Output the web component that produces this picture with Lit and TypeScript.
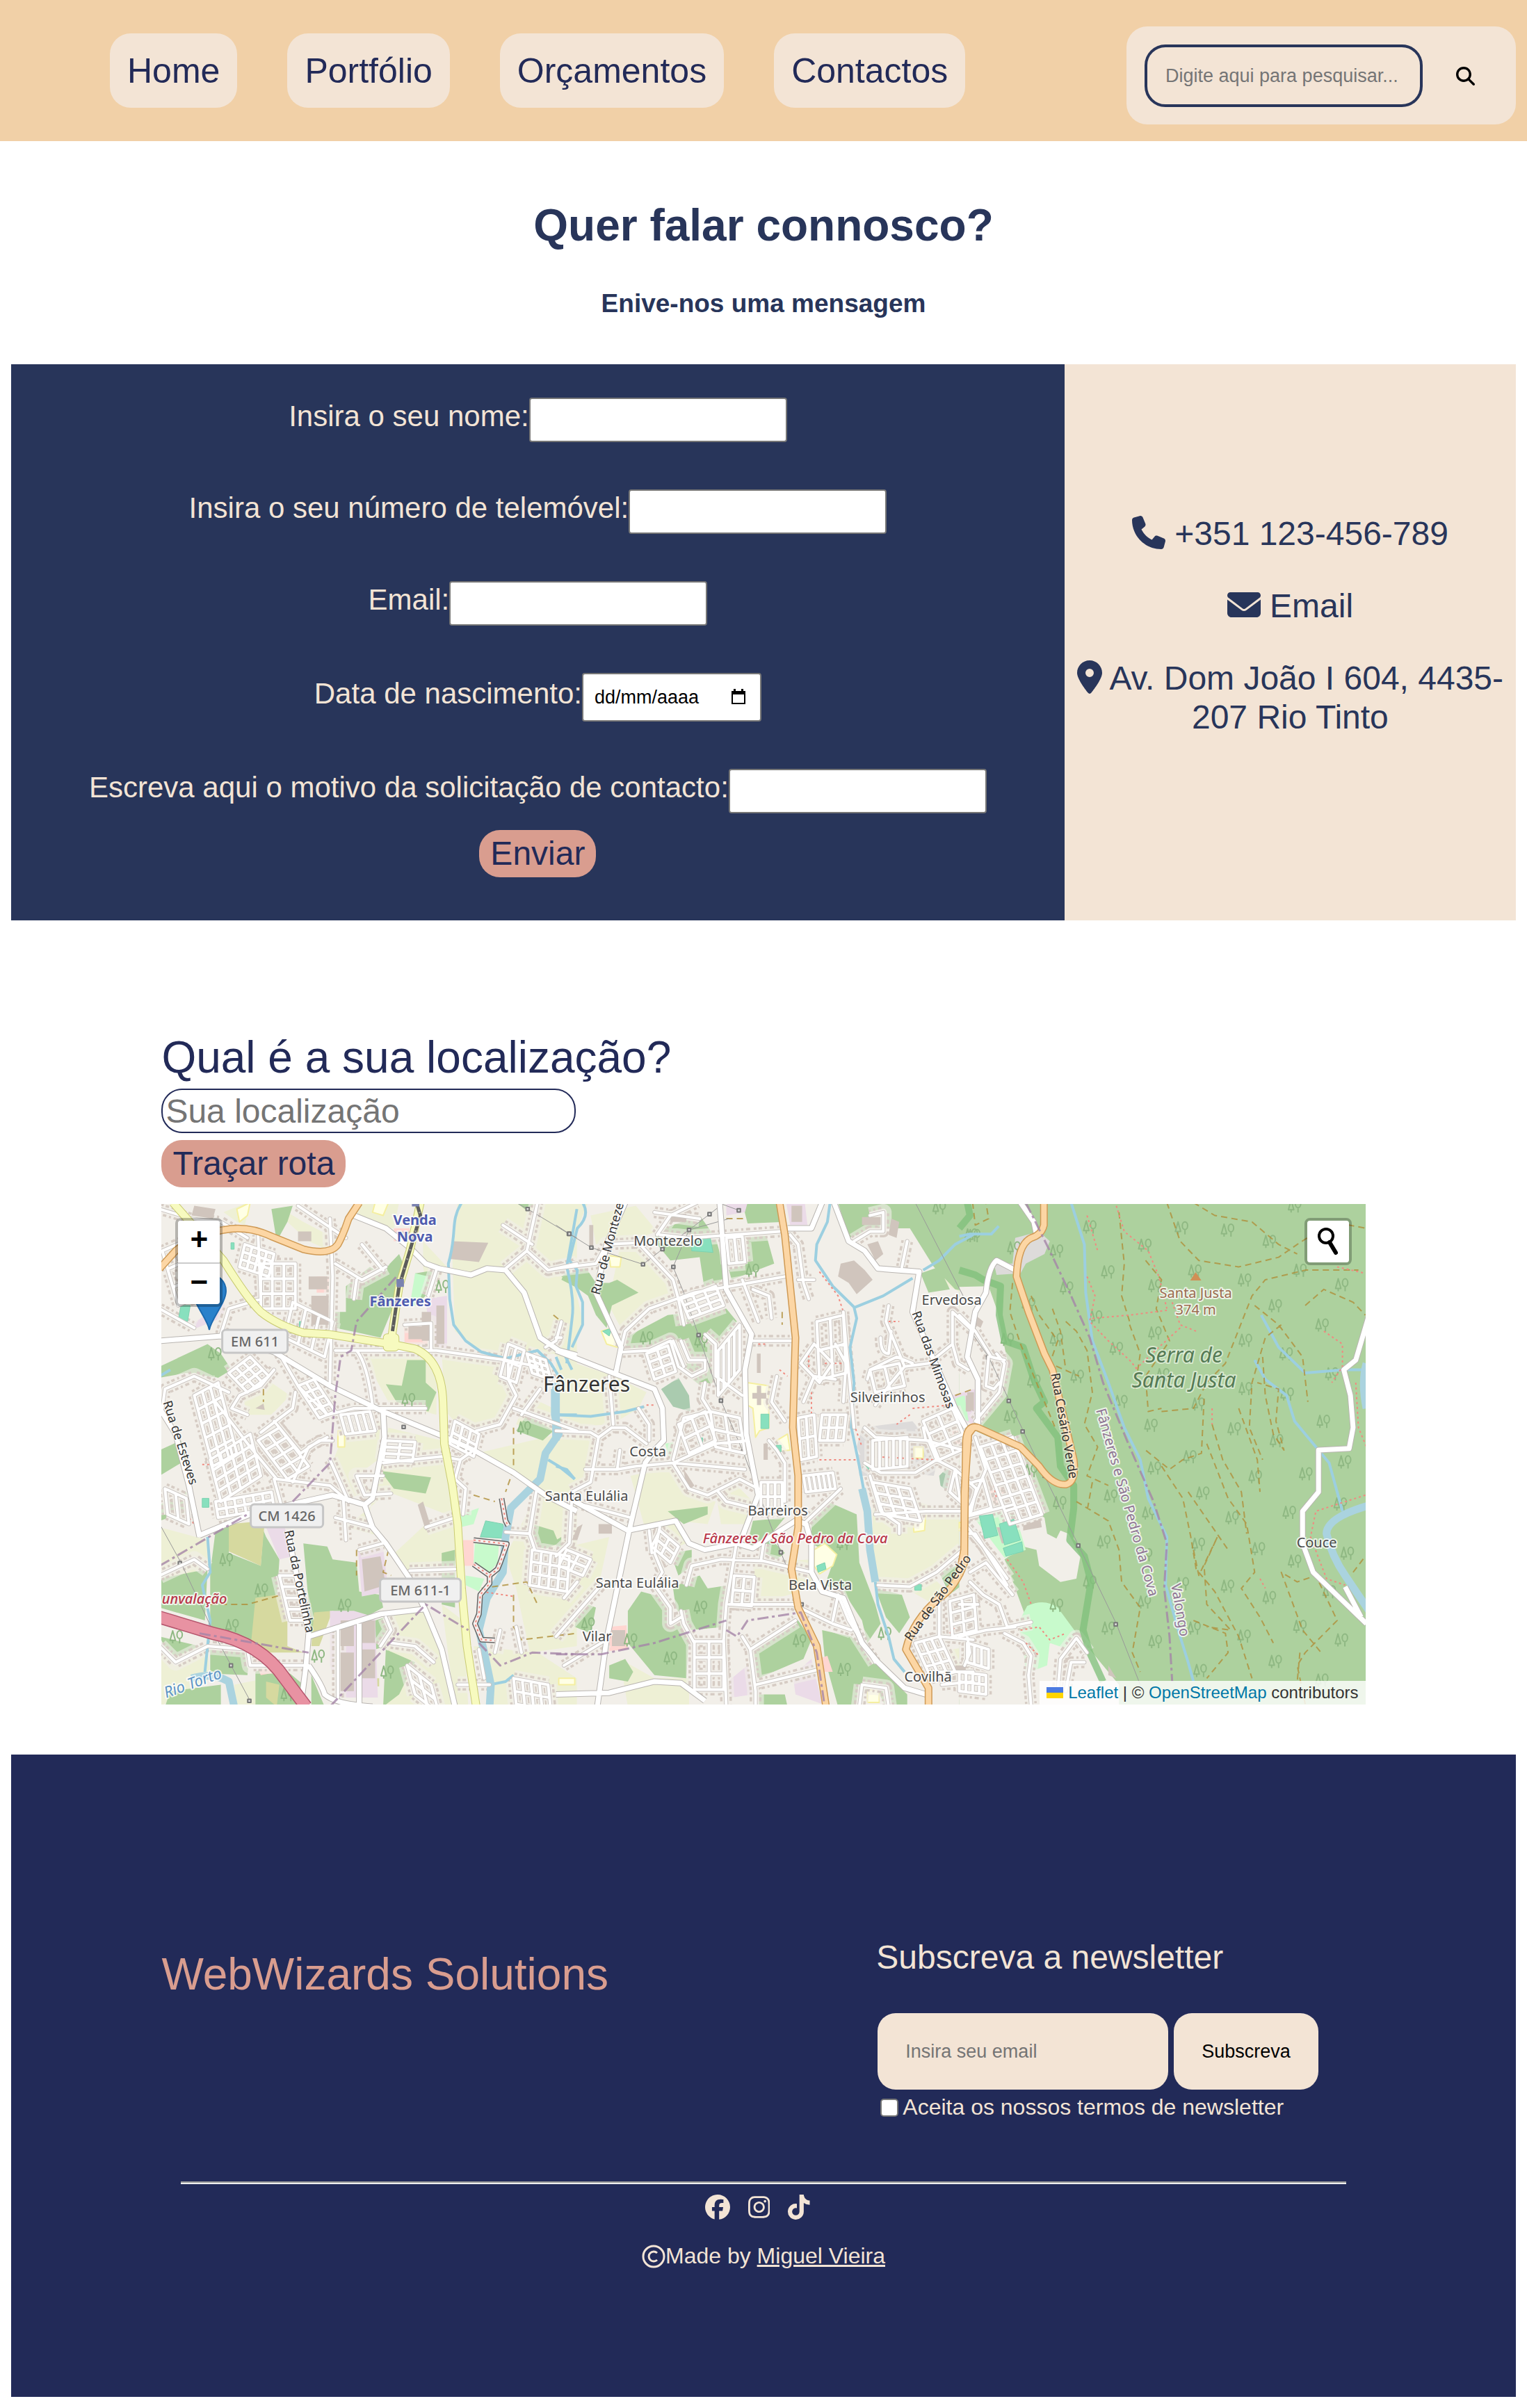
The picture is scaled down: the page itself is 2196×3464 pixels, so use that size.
import { LitElement, html, css, svg } from "lit";
import { customElement } from "lit/decorators.js";

/* ---------- icons ---------- */
const ICONS: Record<string, { w: number; d: string }> = {
  search: { w: 512, d: "M416 208c0 45.9-14.9 88.3-40 122.7L502.6 457.4c12.5 12.5 12.5 32.8 0 45.3s-32.8 12.5-45.3 0L330.7 376c-34.4 25.2-76.8 40-122.7 40C93.1 416 0 322.9 0 208S93.1 0 208 0S416 93.1 416 208zM208 352a144 144 0 1 0 0-288 144 144 0 1 0 0 288z" },
  phone: { w: 512, d: "M164.9 24.6c-7.7-18.6-28-28.5-47.4-23.2l-88 24C12.1 30.2 0 46 0 64C0 311.4 200.6 512 448 512c18 0 33.8-12.1 38.6-29.5l24-88c5.3-19.4-4.6-39.7-23.2-47.4l-96-40c-16.3-6.8-35.2-2.1-46.3 11.6L304.7 368C234.3 334.7 177.3 277.7 144 207.3L193.3 167c13.7-11.2 18.4-30 11.6-46.3l-40-96z" },
  envelope: { w: 512, d: "M48 64C21.5 64 0 85.5 0 112c0 15.1 7.1 29.3 19.2 38.4L236.8 313.6c11.4 8.5 27 8.5 38.4 0L492.8 150.4c12.1-9.1 19.2-23.3 19.2-38.4c0-26.5-21.5-48-48-48H48zM0 176V384c0 35.3 28.7 64 64 64H448c35.3 0 64-28.7 64-64V176L294.4 339.2c-22.8 17.1-54 17.1-76.8 0L0 176z" },
  pin: { w: 384, d: "M215.7 499.2C267 435 384 279.4 384 192C384 86 298 0 192 0S0 86 0 192c0 87.4 117 243 168.3 307.2c12.3 15.3 35.1 15.3 47.4 0zM192 128a64 64 0 1 1 0 128 64 64 0 1 1 0-128z" },
  facebook: { w: 512, d: "M512 256C512 114.6 397.4 0 256 0S0 114.6 0 256C0 376 82.7 476.8 194.2 504.5V334.2H141.4V256h52.8V222.3c0-87.1 39.4-127.5 125-127.5c16.2 0 44.2 3.2 55.7 6.4V172c-6-.6-16.5-1-29.6-1c-42 0-58.2 15.9-58.2 57.2V256h83.6l-14.4 78.2H287V510.1C413.8 494.8 512 386.9 512 256z" },
  instagram: { w: 448, d: "M224.1 141c-63.6 0-114.9 51.3-114.9 114.9s51.3 114.9 114.9 114.9S339 319.5 339 255.9 287.7 141 224.1 141zm0 189.6c-41.1 0-74.7-33.5-74.7-74.7s33.5-74.7 74.7-74.7 74.7 33.5 74.7 74.7-33.6 74.7-74.7 74.7zm146.4-194.3c0 14.9-12 26.8-26.8 26.8-14.9 0-26.8-12-26.8-26.8s12-26.8 26.8-26.8 26.8 12 26.8 26.8zm76.1 27.2c-1.7-35.9-9.9-67.7-36.2-93.9-26.2-26.2-58-34.4-93.9-36.2-37-2.1-147.9-2.1-184.9 0-35.8 1.7-67.6 9.9-93.9 36.1s-34.4 58-36.2 93.9c-2.1 37-2.1 147.9 0 184.9 1.7 35.9 9.9 67.7 36.2 93.9s58 34.4 93.9 36.2c37 2.1 147.9 2.1 184.9 0 35.9-1.7 67.7-9.9 93.9-36.2 26.2-26.2 34.4-58 36.2-93.9 2.1-37 2.1-147.8 0-184.8zM398.8 388c-7.8 19.6-22.9 34.7-42.6 42.6-29.5 11.7-99.5 9-132.1 9s-102.7 2.6-132.1-9c-19.6-7.8-34.7-22.9-42.6-42.6-11.7-29.5-9-99.5-9-132.1s-2.6-102.7 9-132.1c7.8-19.6 22.9-34.7 42.6-42.6 29.5-11.7 99.5-9 132.1-9s102.7-2.6 132.1 9c19.6 7.8 34.7 22.9 42.6 42.6 11.7 29.5 9 99.5 9 132.1s2.7 102.7-9 132.1z" },
  tiktok: { w: 448, d: "M448,209.91a210.06,210.06,0,0,1-122.77-39.25V349.38A162.55,162.55,0,1,1,185,188.31V278.2a74.62,74.62,0,1,0,52.23,71.18V0l88,0a121.18,121.18,0,0,0,1.86,22.17h0A122.18,122.18,0,0,0,381,102.39a121.43,121.43,0,0,0,67,20.14Z" },
};

const icon = (name: string) => html`<svg class="icon" viewBox="0 0 ${ICONS[name].w} 512" aria-hidden="true"><path d=${ICONS[name].d}></path></svg>`;

/* ---------- map data ---------- */

/** Street grid: n lines along u and m lines along v, starting at x,y. */
const grid = (x: number, y: number, ux: number, uy: number, vx: number, vy: number, n: number, m: number) => {
  let d = "";
  for (let i = 0; i <= n; i++) {
    const k = i / n;
    d += `M${x + vx * k} ${y + vy * k}l${ux} ${uy}`;
  }
  for (let i = 0; i <= m; i++) {
    const k = i / m;
    d += `M${x + ux * k} ${y + uy * k}l${vx} ${vy}`;
  }
  return d;
};

/** Tree pair symbols (a conifer beside a round tree). */
const trees = (...p: number[]) => {
  let d = "";
  for (let i = 0; i < p.length; i += 2) {
    const x = p[i], y = p[i + 1];
    d += `M${x - 13} ${y - 18}l-10 30h20zM${x - 13} ${y + 12}v9M${x + 3} ${y - 6}a10 12 0 1 1 20 0a10 12 0 1 1 -20 0M${x + 13} ${y + 6}v15`;
  }
  return d;
};

const pylons = (...p: number[]) => {
  let d = "";
  for (let i = 0; i < p.length; i += 2) d += `M${p[i] - 6} ${p[i + 1] - 5}h12v10h-12z`;
  return d;
};

interface Sector { x: number; [layer: string]: string | number }

const WEST: Sector = {
  x: -2,
  farm: "M240 30 330 0H340L320 70 290 60ZM480 30 540 60 680 120 640 150 560 120 480 60ZM760 0H900L880 80 810 70 740 40ZM990 120 1080 200 1030 260 1010 290 990 200ZM1120 0H1568V520L1480 470 1300 490 1210 470 1110 400 1100 180ZM1060 470 1300 500 1320 600 1340 640 1280 690 1200 710 1130 700 1075 650ZM850 470H1000L1040 540 1040 660 860 620 820 560 770 480ZM1190 780 1360 850 1420 900 1300 1100 1340 1200 1390 1400 1568 1380V800L1500 720ZM1380 600 1480 640 1480 720 1340 690ZM860 700 1060 740 1110 980 1000 1000 870 1100 780 1000 830 800ZM700 1010 840 1040 930 1150 1110 1140 1110 980 860 900ZM860 1280 1000 1270 1070 1430 1100 1568H840ZM1060 1250 1140 1300 1160 1568H1110ZM310 600 380 560 420 560 490 600 420 660 330 660ZM700 700 830 680 820 800 740 850 800 900 700 920 640 830ZM0 1010 180 1050 190 1130 0 1190ZM190 1160 350 1190 330 1300 190 1280ZM0 1400 180 1380 190 1480 0 1568ZM280 1500 400 1480 360 1568H290ZM1180 1380 1420 1400 1568 1480V1568H1250Z",
  forest: "M420 20 500 10 480 60 440 120ZM700 260 790 200 830 220 900 160 920 200 890 300 830 420 720 400 660 390 660 340 700 340ZM960 220 1040 210 1000 290 960 320ZM0 510 180 440 230 470 270 520 220 545 100 530 0 545ZM850 565 910 570 930 490 1000 490 1000 560 1040 590 1010 650 890 620ZM830 835 1020 855 1000 905 880 890ZM210 1020 270 1000 260 1090 380 1130 390 1020 400 1040 450 1110 440 1240 470 1340 340 1380 190 1320 190 1150ZM0 1170 180 1140 170 1300 0 1260ZM0 1350 150 1380 40 1420ZM540 1060 630 1070 650 1110 740 1120 750 1210 830 1220 840 1260 750 1300 650 1270 600 1340 570 1340ZM190 1380 340 1390 330 1470 190 1465ZM850 1390 960 1430 900 1530 840 1568ZM810 1300 850 1290 850 1380 810 1390ZM0 940 100 900 110 960 0 990ZM0 770 80 740 100 800 0 850ZM360 1460 440 1430 540 1500 520 1568H360ZM570 1470 620 1568H570ZM40 1520 230 1500 230 1568H20ZM1380 660 1480 710 1440 740 1340 710ZM1060 1090 1110 1080V1260L1060 1250ZM1520 220 1568 215V265L1510 240ZM1400 1000 1480 1020 1500 1060 1440 1080 1400 1060ZM1340 0H1410L1380 25Z",
  scrub: "M260 1000 395 990 380 1130 260 1085ZM360 1230 480 1215 480 1380 540 1400 340 1400ZM580 1275 650 1270 600 1380 570 1380ZM795 1480h30v25h-30zM400 1490 450 1500 440 1568 400 1540Z",
  works: "M640 1270 730 1270 810 1290 820 1540 680 1540 640 1440ZM745 1080 840 1075 860 1210 760 1225ZM1000 300 1080 290 1080 460 1020 460ZM120 380 240 310 260 350 140 390ZM400 1010 470 1010 500 1100 450 1110Z",
  shops: "M920 380h90v60h-90zM340 1390 420 1400 450 1460 380 1470ZM880 80h60v40h-60zM590 230h55v50h-55zM1140 1050h40v80h-40z",
  school: "M290 20 340 0 330 40 300 60ZM810 0h50l-20 40-40-10ZM470 790h30v40h-30zM670 710h25v50h-25zM1500 1480h60v20h-60z",
  buildings: "M570 290h65v90h-65zM560 230h70v40h-70zM1100 120 1235 125 1200 185 1090 175ZM760 1110 830 1100 850 1190 770 1210ZM680 1300h50v80h-50zM680 1400h50v120h-50zM760 1300h50v70h-50zM760 1390h50v90h-50zM985 340h35v90h-35zM1040 320h30v120h-30zM935 385h50v40h-50zM130 10 210 20 200 50 120 40ZM970 940 990 930 1020 1010 1000 1020ZM360 640l30-15 5 20zM520 90h50v30h-50zM890 90h60v25h-60z",
  pitch: "M80 320 115 320 105 370 70 365ZM1225 990 1290 1000 1300 1045 1205 1040ZM160 920h25v28h-25zM268 125h12v20h-12zM525 370h12v18h-12z",
  park: "M1185 1060 1275 1065 1270 1120 1240 1150 1180 1120ZM1130 970 1200 950 1180 1000 1130 1010ZM1150 1160 1220 1170 1200 1210 1150 1190ZM960 220 1010 230 970 320 940 320Z",
  river: "M1485 580 1485 660 1500 720 1450 780 1430 860 1320 950 1300 1040 1290 1150 1230 1230 1200 1330 1220 1400 1245 1500 1240 1568M120 1480Q200 1460 260 1490L280 1568",
  stream: "M1135 0C1090 60 1120 90 1085 190L1090 300 1105 380 1150 430 1210 465 1300 485 1420 460 1470 500 1500 540M1568 20 1530 200Q1560 300 1550 360L1530 500M180 1040 190 1150 160 1190 190 1300 170 1460M1460 800 1500 820 1560 860M1500 660 1568 660M0 540 40 520M1240 1500 1300 1490 1330 1470",
  steps: "M1285 920 1300 990 1310 1005M1180 1050 1305 1062 1280 1120 1270 1140 1240 1160 1180 1125M1240 1160 1240 1185 1205 1220 1200 1280 1185 1310 1210 1360 1260 1362",
  minor:
    grid(120, 110, 60, 170, -110, 40, 2, 3) + grid(320, 130, 110, 30, -20, 70, 3, 4) + grid(380, 190, 130, 0, 0, 140, 3, 3) + grid(470, 420, 150, 60, 30, -110, 1, 3) +
    grid(520, 570, 80, 100, 60, -20, 2, 4) + grid(340, 480, 70, 60, -80, 50, 3, 3) + grid(130, 600, 70, 220, 90, -40, 3, 5) + grid(190, 800, 150, -80, 40, 130, 4, 4) +
    grid(370, 740, 110, 120, 80, -40, 2, 4) + grid(210, 930, 210, -30, 10, 50, 2, 6) + grid(20, 890, 80, 30, 10, 80, 1, 2) + grid(680, 660, 110, -10, 20, 60, 1, 4) +
    grid(850, 740, 110, 5, -10, 60, 3, 2) + grid(1280, 540, 60, 20, 30, -100, 2, 2) + grid(1380, 470, 70, 20, 20, 60, 3, 3) + grid(1110, 680, 90, 40, -20, 70, 2, 3) +
    grid(1400, 1080, 140, 20, -10, 110, 3, 4) + grid(1330, 1480, 130, 20, 10, 80, 2, 4) + grid(450, 1160, 60, 0, 40, 140, 4, 1) + grid(930, 1440, 90, 60, 30, 90, 2, 2) +
    "M0 20 120 50 230 60 330 110M520 10 700 110M640 50 650 230 640 560M660 190 760 240 850 200M760 130 840 210M740 240 730 300M230 410 260 330 380 300 370 100M0 330 130 390M450 470 520 570 630 660 730 640 1000 640M430 520 380 570 300 600 270 640 330 660M10 640 20 580 130 540 260 590M380 715 500 640 510 590M430 680 530 780 600 740 650 740M210 620 340 760 440 860 640 880 710 930M430 860 470 980M640 800 710 930M690 920 700 1050M750 1080 840 1060M660 980 800 1010M740 460Q780 500 800 630M660 460 1040 460 1300 490 1420 510M1010 290 1040 210M920 380 1020 375 1020 460M1310 500V550L1340 600 1280 690 1190 710M1330 640 1568 710M1430 580 1360 660M1300 205 1380 150 1420 0M1380 150 1460 210 1568 190M1290 70 1400 130M1510 370 1490 430 1450 450M840 850 740 850 770 910 870 905M840 810 940 800 1060 790 1130 800M1180 770 1130 800 1110 860 1150 890 1140 970M1000 1010 1110 980M940 1145 1110 1140M1300 1025 1390 1030 1410 1080M1415 900 1390 1030M830 1380 870 1330 850 1290M0 1380 60 1430 180 1380 330 1390 340 1440 560 1440M0 1160 130 1110 180 1140M870 1370 960 1380 1030 1430M1120 1500 1240 1500M1200 1390 1220 1480M1280 1330 1260 1400M1340 1320 1360 1400M670 1330V1540M500 870 560 760 630 730",
  road: "M0 430 230 415 430 465 640 570 840 650 1060 725 1180 770 1330 840 1450 910 1568 960M730 40 850 80 940 140 1000 190 1050 205 1170 225 1230 205 1300 210 1370 280 1430 420 1500 460 1568 475M840 650 845 730 800 920 770 940 650 910 540 930 340 970 150 1035M770 940 800 1010 850 1060 940 1170 1000 1270 1060 1390 1110 1568M0 640 60 720 110 880 150 1040M480 1020 560 1340 550 1440 530 1568M560 1350 830 1280 990 1265M560 1440Q610 1500 620 1530 660 1560 800 1568M750 1310V1568",
  yellow: "M50 0 240 180Q330 300 380 340 440 380 540 405L640 410 830 435 870 440 960 455Q1060 490 1065 620L1070 750 1100 880 1120 1000 1135 1200 1155 1380 1190 1568M980 0 940 150 900 260 870 430M855 420h30v30h-30z",
  rail: "M965 0 980 40 940 150 900 260 875 400",
  orange: "M0 205 60 150Q130 100 240 85 330 70 420 105L540 145Q640 165 670 130 690 100 710 50L750 0",
  motorway: "M0 1290 200 1340Q380 1370 470 1480L550 1568",
  path: "M390 580V620M1330 700V830L1300 900M1180 910 1260 930M190 1250 330 1250 460 1220M1210 1200 1380 1180 1420 1250M1330 1220V1320L1360 1360 1568 1340M860 1080 840 1150 870 1160M1480 350 1510 370M740 1080V1160",
  border: "M0 1130 330 970M500 930 640 810 660 600 680 480 720 460 740 370 890 230M150 1340 560 1400M640 1568 1000 1250 1160 1330M1200 1370 1280 1440 1400 1400 1568 1405",
  power: "M0 1000 80 1120 210 1350 340 1550M1340 0 1383 20 1538 97 1568 110",
  pylon: pylons(76, 1122, 211, 1352, 268, 1440, 337, 1550, 1383, 20, 1538, 97, 917, 698),
  tree: trees(207, 470, 1062, 260, 935, 612, 250, 1110, 382, 1205, 272, 1315, 62, 1350, 695, 1252, 1370, 700, 480, 1530, 595, 1410, 855, 1460),
  redpath: "M1210 1210 1330 1225M100 970 130 1000M160 815H200",
  station: "M890 238h28v24h-28zM948 0h28v12h-28z",
};

const CENTER: Sector = {
  x: 568,
  farm: "M0 0H120L80 80 60 180 0 200ZM130 40 300 10 380 90 240 130 150 130ZM240 140 330 130 440 240 450 290 330 330 250 400 180 290 210 260ZM0 210 60 220 90 330 100 380 60 450 0 440ZM0 480 220 540 340 590 310 640 210 690 0 700ZM0 720 120 720 160 770 130 870 0 900ZM280 850 440 820 500 900 600 930 570 1000 460 990 330 1000ZM380 1000 440 990 490 1060 420 1080ZM400 380 500 370 560 400 560 440ZM600 900 680 880 740 930 720 1000 620 1000ZM0 1080 200 1040 150 1230 80 1250 0 1200ZM240 1420 270 1568H500V1480L370 1480ZM740 1120 960 1110 960 1200 750 1250ZM1190 880 1530 980 1530 1080 1430 1140 1320 1200 1210 1190 1190 1060ZM1420 210 1470 190 1560 300 1500 270 1420 240ZM1270 1180 1420 1170 1460 1200 1400 1240ZM1410 1400 1568 1380V1480H1440Z",
  forest: "M20 230 110 200 150 250 200 250 230 240 310 280 210 320 190 390 150 350 120 290ZM370 90 540 40 600 110 640 230 560 280 540 170 430 180 380 130ZM260 420 420 350 640 330 680 370 620 420 580 500 600 550 560 580 450 510 420 440 270 470ZM720 110 790 100 820 190 660 240 650 210 720 190ZM700 0H840L860 60 720 65ZM1060 0H1568V280L1500 270 1420 200 1330 80 1200 80 1100 110ZM1370 220 1440 200 1480 270 1400 280ZM420 960 570 945 570 970 480 1000ZM740 990 860 980 800 1040 860 1090 830 1110 720 1060ZM960 960 1020 930 1130 970 1140 1120 1200 1250 1220 1310 1170 1370 1150 1300 1080 1210 1010 1190 1050 1100 960 1060ZM1200 1200 1300 1220 1330 1290 1290 1340 1240 1290ZM430 1090 510 1080 510 1130 460 1160ZM440 1200 500 1170 540 1160 570 1200 650 1190 640 1320 500 1330 450 1260ZM320 1210 410 1230 430 1310 470 1290 500 1340 490 1480 370 1470 270 1370 270 1270ZM90 1240 150 1260 130 1340 70 1320ZM200 1440 260 1420 290 1460 270 1490 200 1480ZM730 1400 910 1300 960 1360 930 1420 760 1480ZM1000 1330 1110 1350 1200 1430 1320 1530 1320 1568H1240L1190 1490 1120 1568H1060L1010 1420ZM0 1100 60 1080 50 1130 0 1160ZM750 1530H860L870 1568H750ZM1440 1150 1568 1110 1540 1180 1480 1220ZM0 1050 20 1040V1100H0Z",
  works: "M865 0H935L945 70 880 70ZM1490 600 1568 580V690L1540 680ZM645 1490 720 1440 740 1530 660 1540ZM890 1470 960 1420 1000 1560 900 1530ZM640 0H720L710 30 640 40Z",
  grey: "M1150 700 1340 680 1440 780 1420 850 1170 830 1130 760ZM1130 780 1180 800 1170 850 1140 850Z",
  shops: "M200 1320 265 1315 270 1390 200 1395ZM980 1420 1020 1410 1040 1460 1000 1460ZM1490 710h30v40h-30z",
  school: "M720 560 800 570 800 700 765 710 750 730 740 640 720 630ZM830 740 870 720 880 770 830 775ZM170 400 210 390 230 450 190 440ZM200 165 245 170 240 200 205 200ZM1340 970 1390 970 1385 1020 1345 1025ZM970 1080 1010 1060 1055 1095 1040 1130 990 1155 970 1130ZM1345 760h35v35h-35zM1170 1515h45v40h-45zM70 1095h50v25h-50zM1235 550h35v30h-35z",
  buildings: "M1070 190 1120 180 1160 210 1190 240 1130 285 1100 250 1060 230ZM1170 130 1210 120 1230 160 1200 180ZM1150 45h70v25h-70zM1260 50 1290 60 1280 110 1250 100ZM755 570h16v60h-16zM738 592h52v18h-52zM885 10h40v50h-40zM210 1330h50v50h-50zM480 830 520 880 490 900ZM1540 600h20v50h-20zM125 70h15v70h-15zM755 470h14v60h-14zM780 750h16v50h-16zM160 1000h50v30h-50zM80 1010 100 1000 80 1050 60 1050ZM430 35h60v25h-60zM1500 1440h40v14h-40z",
  pitch: "M510 110 580 110 590 155 510 150ZM770 658h30v45h-30zM175 400 210 390 200 415ZM828 755h18v20h-18zM980 1130 1010 1120 1015 1140 985 1150ZM1155 810 1180 820 1175 830ZM537 732h14v16h-14zM1348 1188h25v18h-25z",
  park: "M640 390 670 380 680 400 660 415ZM410 750 440 745 430 800ZM1500 610 1530 600 1550 680 1520 670Z",
  dark: "M1440 850Q1480 810 1520 840L1515 880 1480 905 1445 880ZM395 580 460 545 500 600 505 650 440 635Z",
  river: "M0 560V740M1150 890 1170 960 1180 1080 1200 1180",
  stream: "M100 0Q130 40 80 80L50 180 80 210 75 260 100 310 100 380 60 450M0 660 130 665 260 650 330 635M0 820 40 830 70 860M1030 0 1020 60 980 130 975 180 1040 260 1120 325 1130 360 1105 450 1120 560 1110 700 1140 820 1160 910M1125 325 1230 290 1340 235M1380 210 1440 180 1500 130 1568 100M1200 1180 1210 1250 1250 1350 1270 1420 1310 1460M0 480 20 520M30 470 60 520",
  minor:
    grid(640, 110, 60, -5, 10, 80, 1, 2) + grid(470, 300, 130, -40, 30, 60, 3, 3) + grid(340, 470, 80, -25, 30, 80, 3, 2) + grid(610, 460, 80, -80, 0, 140, 1, 4) +
    grid(1000, 660, 90, 0, -10, 80, 2, 3) + grid(930, 850, 110, -10, 10, 50, 1, 6) + grid(1190, 740, 130, -10, 0, 90, 1, 5) + grid(1190, 870, 140, 20, 40, 100, 3, 3) +
    grid(1380, 680, 110, -40, 60, 120, 3, 2) + grid(770, 870, 80, 0, 0, 90, 2, 3) + grid(460, 690, 100, -40, 40, 90, 2, 2) + grid(580, 650, 110, 20, 20, 110, 2, 2) +
    grid(910, 670, 60, -10, 10, 130, 2, 2) + grid(670, 1160, 75, 5, -10, 90, 2, 2) + grid(520, 1365, 110, 0, 0, 150, 3, 2) + grid(1350, 1370, 90, -20, 60, 110, 3, 3) +
    grid(980, 370, 100, -20, 10, 180, 2, 2) + grid(1180, 520, 110, -20, 20, 70, 1, 2) + grid(360, 1070, 70, 50, 30, -50, 2, 2) + grid(10, 1130, 90, 30, 30, -50, 2, 2) +
    grid(1480, 1240, 90, -20, 10, 110, 3, 2) + grid(920, 500, 70, 60, 50, -60, 1, 1) + grid(1480, 900, 80, 60, 20, -70, 1, 1) +
    "M0 205 150 190 190 130 310 125 440 240 460 300 480 380M390 100 500 110 840 90M380 100 430 40 530 0M245 450 260 400 350 330 520 280 860 230M740 270 800 290 810 360M700 240 760 370M740 430H890M250 465 350 460 430 430 460 510 510 540 560 520 560 490 500 490 470 430M440 430 480 510M560 410 600 440 600 540 700 600M560 560 550 610 580 650 480 670 440 800M200 540 215 690M0 710 130 715 160 730 210 700 260 700 340 750M310 640 350 690 350 740M160 730 130 870 60 900M110 830 230 830 300 820 440 810 710 830M240 770 230 830M440 810 600 750 720 740M440 810 500 890 570 910 690 860 760 890M610 900 640 930 740 950M60 910 50 1060 0 1100M100 940 280 980M390 1010 370 1090 400 1150 370 1190 430 1260 430 1310 470 1290M350 1020 360 1090M490 1190 510 1130 620 1110 780 1115 960 1150M680 1050 640 1250 630 1360 640 1568M780 1060 770 1115M470 1270 480 1310 520 1370M650 1250 890 1250 1040 1310 1110 1330M700 1350 730 1390 750 1520 750 1568M730 1390 900 1300M750 1500 1000 1450M800 740 830 770 860 810 860 930M880 100 910 130 930 250 950 300M910 240 970 240M830 540 810 620 860 680M930 620 970 540 1050 550M1080 340 1090 440 1120 700M1050 440 1090 500 1080 620M1250 320 1240 370 1280 450 1310 510 1250 570 1200 630M1310 510 1400 500 1490 440 1490 340 1568 400M1220 420Q1220 470 1250 470L1260 400M1490 440 1510 500 1550 520M1170 550 1180 520 1280 480 1340 500M1160 700 1200 730 1400 740 1430 800 1350 840 1220 840 1160 810M1380 700 1390 740 1530 770M1430 800 1500 830 1520 930M1180 850 1220 960 1290 1000 1290 1030M1200 970 1390 960 1520 960M1210 1190 1330 1195 1430 1150 1530 1080M930 1000 1070 890M1200 1430 1100 1300 1060 1220 1040 1300M1150 1500 1140 1568M1150 1500 1240 1510 1250 1568M1440 1230 1440 1350 1568 1360M1300 200 1310 160 1320 120M1120 120 1180 90 1230 90V30L1180 40M30 1440 190 1360M30 1230 80 1180M1450 1500 1568 1490M1430 1460H1568M0 1350 180 1180M20 420 0 420M370 30 540 50",
  road: "M260 0 190 130 150 280 245 450 225 530M0 460 230 535 370 580 400 640 405 740 370 770 335 810 275 1020 190 1360 155 1568M60 925 270 1020M270 1020 450 990 500 1060 560 1080 680 1060 740 1075 900 990 940 1000 960 1060 960 1150 1000 1210 1080 1230 1150 1370 1210 1430 1310 1510 1390 1530M615 0 640 270 735 410 710 520 715 720 760 910 700 1040M1045 0 1100 120 1160 150 1210 205 1365 215 1340 340 1500 640 1540 700M870 80 960 80 1000 0M0 1530 200 1525 370 1490 470 1495 560 1550",
  orange: "M840 0 860 100 900 420 890 700 910 850 910 1010 885 1140 910 1260 980 1380 1015 1568M1568 700 1550 720 1535 900 1535 1120Q1500 1200 1440 1230 1340 1300 1315 1390L1400 1510 1400 1568",
  path: "M640 50H710M850 340V380M1500 600 1568 580",
  border: "M0 1405 170 1405 370 1370 640 1300M640 1330 680 1350 720 1300 920 1275 980 1400 1010 1568",
  power: "M0 70 50 97 133 140 327 192 400 145 500 85 577 36 625 5 687 24M500 85 440 200 480 280 620 616 703 775 845 1088 923 1250 990 1412M500 85 650 50M1350 0 1530 290",
  pylon: pylons(50, 97, 133, 140, 327, 192, 400, 145, 500, 85, 577, 36, 441, 200, 536, 412, 620, 616, 703, 775, 845, 1088, 923, 1250, 990, 1412, 687, 24, 896, 752),
  tree: trees(340, 420, 738, 210, 543, 1258, 430, 1416, 915, 1362, 1083, 1452, 120, 1310, 280, 1360, 545, 430, 1440, 15, 1080, 1060, 1560, 100, 1235, 1340),
  redpath: "M990 215 1060 290 1080 340M930 240 980 240M950 460V520M1010 500H1100M960 590 960 660M990 800H1130M1190 790 1420 800M1120 690 1150 760M840 520 870 540M760 440H790M1250 370H1290M1340 640 1480 630M1330 660 1280 690M340 630H370M1480 1340 1500 1320",
};

const EAST: Sector = {
  x: 1148,
  farm: "M0 260 20 262 0 300ZM0 1320 100 1340 180 1390 230 1420 210 1450 130 1440 80 1400 0 1390Z",
  forestBase: "M0 0H1540V1568H0Z",
  land: "M0 262 110 260 140 330 180 490 150 600 80 690 0 700ZM0 700 60 710 220 770 300 970 320 980 330 1030 365 1045 380 1020 410 1030 455 1100 440 1170 380 1180 300 1130 290 1080 240 1070 170 1110 250 1290 260 1470 340 1370 450 1350 600 1500V1568H0Z",
  grey: "M210 110 300 90 340 120 320 160 250 190 230 220 140 225 130 190 200 190Z",
  forest: "M270 1490 320 1460 350 1480 330 1568H280Z",
  works: "M0 600 60 580 60 680 20 640Z",
  park: "M55 980 200 940 250 1080 170 1105ZM220 1310 255 1255Q320 1230 370 1260L450 1350 410 1390 340 1370 330 1440 250 1465 240 1380ZM0 610 20 600 35 680 10 670Z",
  shops: "M90 900 170 880 185 925 105 945Z",
  school: "M0 995H35L40 1020 0 1020Z",
  buildings: "M30 590 55 590 55 650 30 640ZM240 1005 305 985 310 1010 240 1020ZM60 350 90 370 80 390 60 380ZM150 760 210 745 212 752 152 770ZM140 1010h20l15 50h-15zM560 1440 590 1480 560 1470Z",
  pitch: "M75 975 125 970 145 1035 95 1045ZM150 1000 205 985 230 1050 170 1065ZM165 1075 235 1055 240 1085 175 1100Z",
  greenEdge: "M0 210 60 225 90 240 155 260 150 350 170 430 240 450 280 550 320 620 290 640 370 730 380 820 430 880 430 950 415 1050 470 1100 495 1180 465 1330 490 1400 540 1490M30 0 40 40 0 80",
  river: "M1540 942Q1380 980 1380 1030 1400 1100 1450 1160L1540 1270M1530 500Q1510 560 1530 640",
  stream: "M420 0 470 130 475 280 500 430 560 560 620 700 680 800 710 920 780 1040 775 1190 830 1350 860 1430 880 1490M1135 350 1200 450 1300 530 1445 520 1530 520M1110 490 1150 550 1230 600 1260 680 1390 810 1440 960M0 105 40 98 120 98 148 73",
  minor:
    grid(80, 760, 120, -30, 110, 240, 6, 3) + grid(30, 1370, 80, 20, 0, 60, 1, 3) + grid(0, 1460, 100, 10, 0, 60, 2, 4) + grid(10, 880, 80, -20, 30, 90, 1, 1) +
    "M0 350 60 400 120 480 170 490M60 680 150 590 170 500 140 470M110 480 100 570 130 580 150 560M60 730 100 830 30 970M35 975 200 940M20 1030 60 1030 180 1190M40 1180 90 1220 150 1250 180 1320 270 1305M0 1250 70 1250M0 1350 100 1330 210 1320M40 1150 100 1120 200 1220M20 1000 130 1110 180 1170M170 1340 240 1370 270 1410 260 1470 270 1568M30 1350 40 1400 20 1440M370 1520 380 1420 440 1355 480 1400M400 1520 420 1430 470 1430",
  road: "M230 0 280 60 290 100M210 210 140 180Q110 200 100 280L60 340 30 480 70 550 70 690M1540 350 1490 490 1445 520 1470 600 1480 700 1465 765 1350 770 1350 900 1290 960 1290 1060 1330 1150 1430 1230 1530 1310M1450 1195 1510 1290",
  orange: "M318 0 318 70Q310 100 270 110 220 130 215 230L260 340 320 470 350 520 430 800Q440 870 400 877 350 880 300 820L230 760 70 700Q30 690 25 740L18 1080 0 1160",
  path: "M780 0 830 120 900 180 1050 200 1200 170 1270 130 1400 60 1530 80M880 0 960 40 1100 60 1200 130 1270 160M600 30 620 190 610 290 640 370M200 250 190 340 230 440 290 560 360 700M270 290 300 350 370 430 340 500 450 540M400 370 440 400 480 460 500 590 470 690 520 760 480 850 560 880M700 180 760 240 740 330 790 430 700 540 710 650 760 640M760 650 880 640 930 560 1000 500 1100 290 1150 240 1300 210 1500 210M920 610 910 780 840 800 790 830 700 770M760 820 840 920 870 1040 890 1140 960 1210 1050 1350 1100 1480M930 750 1010 920 1080 1000 1110 1150 1060 1200 1130 1290 1180 1370M950 690 990 800 1060 900 1080 1030M1050 640 1120 800 1130 900M1140 480 1150 600 1180 720 1220 770 1190 680 1200 580 1120 560M1110 320 1200 380 1290 480 1310 620M1210 380 1150 420 1100 560 1090 700 1140 800M1300 320 1370 270 1480 310 1526 350M1300 1560 1270 1440 1300 1400 1420 1300 1340 1160 1270 1180 1210 1150 1290 1330 1360 1400M880 1080 900 1160 970 1040 920 1130 930 1250 1020 1330 930 1320M440 930 560 990 600 1080 610 1180 680 1260 650 1400 680 1460M500 870 480 960M880 1300 1000 1340 1010 1400 930 1480M50 0 60 70 110 50 100 0M1280 1400 1270 1490M350 330 380 400 400 520M1480 1150 1526 1100M860 900 960 1020 1010 1080M640 380 680 470 660 580",
  border: "M250 0 340 150 420 290 490 420 540 560 640 760 730 930 780 1060 770 1200 790 1350 800 1490",
  redpath: "M590 10 620 90 710 150 750 230 780 330M480 230 510 290 490 370 560 430 640 490 670 520M500 360 640 350 780 335M800 310 830 380 890 400M830 390 750 450 660 520M1370 400 1440 440 1440 510 1400 560M1490 560 1500 700 1530 760M1526 910 1340 960 1320 1040 1380 1170 1450 1190M180 1110 240 1180 270 1250M230 1330 300 1320 340 1360 400 1340M250 1370 300 1410M480 40 520 150M950 640V690M1420 200 1526 220M1130 1170 1150 1200M130 880 140 920",
  power: "M0 350 110 480 190 620 240 710 320 850 450 1070 590 1310 680 1500",
  pylon: pylons(108, 482, 186, 617, 238, 712, 321, 850, 447, 1067, 588, 1312),
  tree: trees(
    490, 75, 835, 78, 1008, 85, 1165, 120, 697, 132, 365, 150, 558, 215, 885, 212, 1280, 210, 1437, 255, 1072, 240, 735, 258, 403, 265, 1187, 320, 1363, 380, 512, 355,
    735, 405, 590, 453, 1075, 428, 365, 425, 1228, 470, 443, 540, 1400, 532, 280, 555, 765, 535, 1075, 578, 1232, 595, 607, 618, 898, 626, 193, 665, 720, 692, 1033, 703,
    1368, 680, 1192, 740, 866, 790, 1448, 806, 733, 825, 1302, 843, 1112, 852, 268, 833, 569, 912, 915, 903, 377, 933, 1432, 937, 1025, 980, 1240, 963, 712, 965, 543, 1055,
    898, 1062, 1124, 1076, 1458, 1090, 1260, 1115, 838, 1185, 490, 1180, 1008, 1193, 1390, 1210, 1165, 1228, 695, 1242, 365, 1252, 560, 1323, 882, 1323, 1280, 1318, 736, 1365,
    1070, 1348, 1436, 1360, 1187, 1427, 905, 1455, 1362, 1485, 54, 102, 1260, 10, 260, 315, 205, 140, 180, 425, 700, 1095),
};

const SECTORS = [WEST, CENTER, EAST];

/** Map layers, bottom to top. One data key can be stroked several times. */
const LAYERS: Array<[string, string]> = [
  ["farm", "a-farm"], ["forest", "a-forest"], ["forestBase", "a-forest"], ["land", "a-land"], ["grey", "a-grey"],
  ["scrub", "a-scrub"], ["works", "a-works"], ["shops", "a-shops"], ["school", "a-school"], ["park", "a-park"], ["dark", "a-dark"],
  ["minor", "l-plot"], ["minor", "l-house"], ["minor", "l-yard"],
  ["buildings", "a-build"], ["pitch", "a-pitch"], ["tree", "l-tree"], ["greenEdge", "l-edge"],
  ["stream", "l-stream"], ["river", "l-river"], ["path", "l-path"], ["redpath", "l-redpath"], ["power", "l-power"], ["pylon", "l-pylon"],
  ["steps", "l-steps-c"], ["steps", "l-steps"], ["steps", "l-redpath"],
  ["minor", "l-minor-c"], ["road", "l-road-c"], ["minor", "l-minor"], ["road", "l-road"],
  ["motorway", "l-motor-c"], ["motorway", "l-motor"], ["orange", "l-orange-c"], ["orange", "l-orange"],
  ["yellow", "l-yellow-c"], ["yellow", "l-yellow"], ["rail", "l-rail"], ["rail", "l-rail-gap"], ["station", "a-station"], ["border", "l-border"],
];

/** Label: x, y (centre), text, style class, rotation. */
const LABELS: Array<[number, number, string, string, number]> = [
  [365, 30, "Venda", "t-station", 0], [365, 54, "Nova", "t-station", 0], [344, 147, "Fânzeres", "t-station", 0],
  [612, 270, "Fânzeres", "t-town", 0], [612, 427, "Santa Eulália", "t-place", 0], [729, 60, "Montezelo", "t-place", 0],
  [1137, 145, "Ervedosa", "t-place", 0], [1045, 285, "Silveirinhos", "t-place", 0], [700, 363, "Costa", "t-place", 0],
  [685, 552, "Santa Eulália", "t-place", 0], [627, 629, "Vilar", "t-place", 0], [887, 448, "Barreiros", "t-place", 0],
  [948, 555, "Bela Vista", "t-place", 0], [1103, 687, "Covilhã", "t-place", 0], [1662, 494, "Couce", "t-place", 0],
  [912, 488, "Fânzeres / São Pedro da Cova", "t-exit", 0], [48, 575, "unvalação", "t-exit", 0],
  [48, 696, "Rio Torto", "t-river", -20],
  [22, 345, "Rua de Esteves", "t-road", 72], [193, 544, "Rua da Portelinha", "t-road", 78], [650, 58, "Rua de Montezelo", "t-road", -75],
  [1105, 226, "Rua das Mimosas", "t-road", 70], [1122, 570, "Rua de São Pedro", "t-road", -54], [1293, 320, "Rua Cesário Verde", "t-road", 80],
  [1383, 431, "Fânzeres e São Pedro da Cova", "t-border", 74], [1459, 585, "Valongo", "t-border", 80],
  [1488, 135, "Santa Justa", "t-peak", 0], [1488, 159, "374 m", "t-peak", 0],
  [1471, 228, "Serra de", "t-hills", 0], [1471, 264, "Santa Justa", "t-hills", 0],
];

const SHIELDS: Array<[number, number, number, string]> = [
  [88, 181, 94, "EM 611"], [129, 432, 104, "CM 1426"], [315, 539, 116, "EM 611-1"],
];

@customElement("route-map")
export class RouteMap extends LitElement {
  static styles = css`
    :host { display: block; position: relative; height: 720px; overflow: hidden; background: #f2efe9; font-family: "Liberation Sans", Arial, sans-serif; }
    .tiles { position: absolute; inset: 0; width: 100%; height: 100%; }
    .tiles path { fill: none; vector-effect: non-scaling-stroke; stroke-linejoin: round; }
    .tiles .a-farm { fill: #eef0d5; }
    .tiles .a-forest { fill: #add19e; }
    .tiles .a-land { fill: #f2efe9; }
    .tiles .a-grey { fill: #dddbda; }
    .tiles .a-scrub { fill: #d6d99f; }
    .tiles .a-works { fill: #ebdbe8; }
    .tiles .a-shops { fill: #ffd6d1; }
    .tiles .a-school { fill: #ffffe5; stroke: #f5efa0; stroke-width: 2; }
    .tiles .a-park { fill: #c8facc; }
    .tiles .a-dark { fill: #aacbaf; }
    .tiles .a-build { fill: #d0c5bd; }
    .tiles .a-pitch { fill: #88e0be; stroke: #7cd2b0; stroke-width: 1; }
    .tiles .a-station { fill: #7981b0; }
    .tiles .l-plot { stroke: #f2efe9; stroke-width: 24; opacity: 0.6; }
    .tiles .l-house { stroke: #d6ccc4; stroke-width: 17; stroke-dasharray: 4 3 5 4 3 4 6 5; }
    .tiles .l-yard { stroke: #f2efe9; stroke-width: 10; }
    .tiles .l-tree { stroke: #8fb883; stroke-width: 2; }
    .tiles .l-edge { stroke: #7fc07a; stroke-width: 10; opacity: 0.75; }
    .tiles .l-stream { stroke: #9ccfe0; stroke-width: 4; }
    .tiles .l-river { stroke: #aad3df; stroke-width: 11; }
    .tiles .l-path { stroke: #b08f3a; stroke-width: 2; stroke-dasharray: 9 6; opacity: 0.8; }
    .tiles .l-redpath { stroke: #f08a80; stroke-width: 2; stroke-dasharray: 3 4; }
    .tiles .l-steps-c { stroke: #666; stroke-width: 8; }
    .tiles .l-steps { stroke: #f5f0ee; stroke-width: 5; }
    .tiles .l-power { stroke: #999; stroke-width: 1; }
    .tiles .l-pylon { stroke: #777; stroke-width: 2; fill: #ddd; }
    .tiles .l-minor-c { stroke: #cbc6c2; stroke-width: 6; stroke-linecap: round; }
    .tiles .l-minor { stroke: #fff; stroke-width: 4; stroke-linecap: round; }
    .tiles .l-road-c { stroke: #b9b5b1; stroke-width: 9; }
    .tiles .l-road { stroke: #fff; stroke-width: 7; }
    .tiles .l-motor-c { stroke: #b5566d; stroke-width: 19; }
    .tiles .l-motor { stroke: #e892a2; stroke-width: 16; }
    .tiles .l-orange-c { stroke: #cf9a55; stroke-width: 11; }
    .tiles .l-orange { stroke: #fcd6a4; stroke-width: 8; }
    .tiles .l-yellow-c { stroke: #c9cb72; stroke-width: 12; }
    .tiles .l-yellow { stroke: #f7fabf; stroke-width: 10; }
    .tiles .l-rail { stroke: #5c5c5c; stroke-width: 5; }
    .tiles .l-rail-gap { stroke: #999; stroke-width: 3; stroke-dasharray: 2 12; }
    .tiles .l-border { stroke: #a585a8; stroke-width: 3; stroke-dasharray: 16 5 4 5; opacity: 0.8; }
    .tiles text { font-family: "Noto Sans", "Open Sans", sans-serif; font-size: 20px; text-anchor: middle; paint-order: stroke; stroke: rgba(255, 255, 255, 0.75); stroke-width: 4px; stroke-linejoin: round; fill: #555; }
    .tiles .t-station { font-weight: 700; fill: #4f5cb0; }
    .tiles .t-town { font-size: 30px; fill: #333; }
    .tiles .t-place { fill: #4a4a4a; }
    .tiles .t-exit { font-style: italic; font-weight: 500; fill: #b93649; }
    .tiles .t-river { font-style: italic; font-size: 22px; fill: #5d94c6; }
    .tiles .t-road { font-size: 18px; fill: #333; stroke: rgba(255, 255, 255, 0.4); }
    .tiles .t-border { fill: #8f7494; }
    .tiles .t-peak { fill: #9c6b50; }
    .tiles .t-hills { font-size: 30px; font-style: italic; fill: #557a55; stroke: rgba(255, 255, 255, 0.5); }
    .tiles .shield { fill: #f0f0f0; stroke: #c6c6c6; stroke-width: 3; }
    .tiles .t-shield { stroke: none; fill: #666; font-weight: 500; }
    .tiles .peak { fill: #d08f55; }
    .control { position: absolute; border: 4px solid rgba(0, 0, 0, 0.25); background-clip: padding-box; border-radius: 8px; overflow: hidden; }
    .zoom { left: 20px; top: 20px; display: flex; flex-direction: column; }
    .find { right: 20px; top: 20px; display: flex; }
    .control button { display: flex; align-items: center; justify-content: center; width: 60px; height: 60px; margin: 0; padding: 0; border: 0; background: #fff; color: #000; font: bold 44px/60px "Liberation Mono", monospace; cursor: pointer; }
    .zoom button + button { border-top: 2px solid #ccc; }
    .marker { position: absolute; left: 44px; top: 100px; width: 50px; height: 82px; }
    .credit { position: absolute; right: 0; bottom: 0; display: flex; align-items: center; gap: 7px; padding: 0 10px; background: rgba(255, 255, 255, 0.8); color: #333; font-size: 24px; line-height: 34px; }
    .credit a { color: #0078a8; text-decoration: none; }
    .flag { width: 24px; height: 16px; }
  `;

  render() {
    return html`
      <svg class="tiles" viewBox="0 0 1732 720" preserveAspectRatio="xMidYMid slice" role="img" aria-label="Mapa de Fânzeres">
        ${LAYERS.map(([key, cls]) => SECTORS.map((s) => s[key]
          ? svg`<path class=${cls} transform="translate(${s.x} -2) scale(.38265 .4624)" d=${s[key]}></path>` : null))}
        <path class="peak" d="M1480 110 1488 98 1496 110Z"></path>
        ${LABELS.map(([x, y, t, cls, a]) => svg`<text class=${cls} transform="translate(${x} ${y}) rotate(${a})">${t}</text>`)}
        ${SHIELDS.map(([x, y, w, t]) => svg`<rect class="shield" x=${x} y=${y} width=${w} height="33" rx="5"></rect><text class="t-shield" x=${x + w / 2} y=${y + 24}>${t}</text>`)}
      </svg>
      <svg class="marker" viewBox="0 0 50 82" role="img" aria-label="Marcador">
        <path d="M25 81C23 66 1 42 1 25a24 24 0 0 1 48 0C49 42 27 66 25 81Z" fill="#2a81cb" stroke="#1c6aaf" stroke-width="2"></path>
        <circle cx="25" cy="25" r="9" fill="#fff"></circle>
      </svg>
      <div class="control zoom">
        <button type="button" aria-label="Aproximar">+</button>
        <button type="button" aria-label="Afastar">−</button>
      </div>
      <div class="control find">
        <button type="button" aria-label="Procurar no mapa">
          <svg width="60" height="60" viewBox="0 0 60 60" aria-hidden="true">
            <circle cx="27" cy="22" r="10" fill="none" stroke="#000" stroke-width="4"></circle>
            <path d="M32 31 41 46" stroke="#000" stroke-width="6" stroke-linecap="round"></path>
          </svg>
        </button>
      </div>
      <div class="credit">
        <svg class="flag" viewBox="0 0 12 8" aria-hidden="true"><path fill="#4c7be1" d="M0 0h12v4H0z"></path><path fill="#ffd500" d="M0 4h12v4H0z"></path></svg>
        <span><a href="#leaflet">Leaflet</a> | © <a href="#osm">OpenStreetMap</a> contributors</span>
      </div>`;
  }
}

@customElement("app-root")
export class AppRoot extends LitElement {
  static styles = css`
    :host { display: block; background: #fff; color: #28355a; font-family: "Liberation Sans", Arial, sans-serif; --cream: #f3e4d5; --slate: #28355a; --navy: #222a58; --rose: #d99d8f; }
    * { box-sizing: border-box; }
    h1, h2, p { margin: 0; font-weight: 400; }
    a { color: inherit; }
    input, button { font-family: inherit; font-size: 27px; margin: 0; }
    input::placeholder { color: #757575; opacity: 1; }
    button { cursor: pointer; }
    .icon { height: 1em; fill: currentColor; }

    .header { display: flex; justify-content: space-between; align-items: flex-start; padding: 38px 16px 24px 158px; background: #f1d0a7; }
    .nav { display: flex; gap: 72px; padding-top: 10px; }
    .nav a { padding: 26px 25px 24px; border-radius: 30px; background: var(--cream); color: var(--navy); font-size: 50px; line-height: 57px; text-decoration: none; }
    .search { display: flex; align-items: center; padding: 26px 33px 25px 26px; border-radius: 30px; background: var(--cream); }
    .search input { width: 400px; height: 90px; padding: 0 26px; border: 4px solid var(--slate); border-radius: 30px; background: transparent; }
    .search button { display: flex; padding: 20px 26px; margin-left: 22px; border: 0; background: none; color: #000; }

    .intro { display: flex; flex-direction: column; align-items: center; gap: 54px; padding: 84px 16px 66px; text-align: center; }
    .intro h1 { font-size: 64px; line-height: 74px; font-weight: 700; }
    .intro h2 { font-size: 37px; line-height: 43px; font-weight: 700; }

    .contact { display: grid; grid-template-columns: 7fr 3fr; margin: 0 16px; }
    .form { display: flex; flex-direction: column; align-items: center; padding: 48px 16px 62px; background: var(--slate); color: var(--cream); }
    .row { display: flex; align-items: baseline; margin-bottom: 68px; font-size: 42px; line-height: 48px; }
    .row:last-of-type { margin-bottom: 24px; }
    .row input { width: 371px; height: 64px; padding: 0 4px; border: 2px solid #767676; border-radius: 4px; background: #fff; color: #000; }
    .date { position: relative; display: inline-flex; align-items: baseline; }
    .row .date input { width: 258px; height: 70px; padding: 0 16px; }
    .date input::placeholder { color: #000; }
    .calendar { position: absolute; right: 22px; top: 22px; display: flex; padding: 0; border: 0; background: none; }
    .pill { padding: 6px 16px; border: 0; border-radius: 30px; background: var(--rose); color: var(--navy); font-size: 48px; line-height: 56px; }
    .details { display: flex; flex-direction: column; justify-content: center; gap: 48px; padding: 0 16px 48px; background: var(--cream); font-size: 48px; line-height: 56px; text-align: center; }
    .details .icon { vertical-align: -6px; }
    .details a { text-decoration: none; }

    .location { margin: 0 16px; }
    .inner { padding: 0 10%; }
    .location .inner { display: flex; flex-direction: column; align-items: flex-start; padding-top: 160px; padding-bottom: 72px; }
    .location label { color: var(--navy); font-size: 64px; line-height: 74px; margin-bottom: 8px; }
    .location input { width: 596px; max-width: 100%; height: 64px; padding: 0 4px; border: 2px solid var(--navy); border-radius: 30px; background: #fff; font-size: 48px; margin-bottom: 10px; }
    .location .pill { margin-bottom: 24px; }
    .location route-map { align-self: stretch; }

    .footer { margin: 0 16px 16px; padding: 264px 0 184px; background: var(--navy); color: var(--cream); font-size: 32px; line-height: 37px; }
    .top { display: grid; grid-template-columns: 19fr 13fr; align-items: start; }
    .brand { padding-top: 15px; color: var(--rose); font-size: 64px; line-height: 74px; }
    .top h2 { font-size: 48px; line-height: 55px; margin-bottom: 53px; }
    .subscribe { display: flex; gap: 8px; padding-left: 2px; }
    .subscribe input { width: 418px; height: 110px; padding: 0 40px; border: 0; border-radius: 26px; background: var(--cream); }
    .subscribe button { height: 110px; padding: 0 40px; border: 0; border-radius: 26px; background: var(--cream); color: #000; white-space: nowrap; }
    .terms { display: flex; align-items: center; gap: 6px; padding: 7px 0 0 6px; }
    .terms input { appearance: none; width: 26px; height: 26px; border: 2px solid #767676; border-radius: 5px; background: #fff; }
    .terms input:checked { background: #0075ff; }
    .rule { height: 4px; margin: 88px 28px 15px; border: 0; border-top: 2px solid #9a9a9a; border-bottom: 2px solid #eee; }
    .social { display: flex; justify-content: center; align-items: center; gap: 26px; padding-right: 18px; font-size: 36px; line-height: 36px; }
    .social a { display: flex; }
    .copy { display: flex; justify-content: center; align-items: center; margin-top: 34px; }
    .copy svg { width: 34px; height: 34px; }
  `;

  private field(id: string, label: string, type = "text") {
    return html`<div class="row"><label for=${id}>${label}</label><input id=${id} type=${type}></div>`;
  }

  render() {
    return html`
      <header class="header">
        <nav class="nav">
          ${["Home", "Portfólio", "Orçamentos", "Contactos"].map((t) => html`<a href="#${t.toLowerCase()}">${t}</a>`)}
        </nav>
        <div class="search">
          <input type="text" aria-label="Pesquisar" placeholder="Digite aqui para pesquisar...">
          <button type="button" aria-label="Pesquisar">${icon("search")}</button>
        </div>
      </header>
      <main>
        <div class="intro">
          <h1>Quer falar connosco?</h1>
          <h2>Enive-nos uma mensagem</h2>
        </div>
        <section class="contact">
          <form class="form" @submit=${(e: Event) => e.preventDefault()}>
            ${this.field("nome", "Insira o seu nome:")}
            ${this.field("tel", "Insira o seu número de telemóvel:", "tel")}
            ${this.field("email", "Email:", "email")}
            <div class="row">
              <label for="data">Data de nascimento:</label>
              <span class="date">
                <input id="data" type="text" inputmode="numeric" placeholder="dd/mm/aaaa">
                <button class="calendar" type="button" aria-label="Abrir calendário">
                  <svg width="22" height="24" viewBox="0 0 22 24" aria-hidden="true"><path d="M2 5H20V22H2Z" fill="none" stroke="#000" stroke-width="2"></path><path d="M1 4H21V9H1ZM4 1H7V5H4ZM15 1H18V5H15Z"></path></svg>
                </button>
              </span>
            </div>
            ${this.field("motivo", "Escreva aqui o motivo da solicitação de contacto:")}
            <button class="pill" type="submit">Enviar</button>
          </form>
          <div class="details">
            <p>${icon("phone")} +351 123-456-789</p>
            <p><a href="#email">${icon("envelope")} Email</a></p>
            <p>${icon("pin")} Av. Dom João I 604, 4435-207 Rio Tinto</p>
          </div>
        </section>
        <section class="location">
          <div class="inner">
            <label for="local">Qual é a sua localização?</label>
            <input id="local" type="text" placeholder="Sua localização">
            <button class="pill" type="button">Traçar rota</button>
            <route-map></route-map>
          </div>
        </section>
      </main>
      <footer class="footer">
        <div class="inner">
          <div class="top">
            <p class="brand">WebWizards Solutions</p>
            <div>
              <h2>Subscreva a newsletter</h2>
              <div class="subscribe">
                <input type="email" aria-label="Email" placeholder="Insira seu email">
                <button type="button">Subscreva</button>
              </div>
              <div class="terms">
                <input id="termos" type="checkbox">
                <label for="termos">Aceita os nossos termos de newsletter</label>
              </div>
            </div>
          </div>
          <hr class="rule">
          <div class="social">
            <a href="#facebook" aria-label="Facebook">${icon("facebook")}</a>
            <a href="#instagram" aria-label="Instagram">${icon("instagram")}</a>
            <a href="#tiktok" aria-label="TikTok">${icon("tiktok")}</a>
          </div>
          <p class="copy">
            <svg viewBox="0 0 34 34" fill="none" stroke="currentColor" aria-hidden="true"><circle cx="17" cy="17" r="15" stroke-width="3"></circle><path d="M22 12a7 7 0 1 0 0 10" stroke-width="3"></path></svg>
            <span>Made by <a href="#miguel">Miguel Vieira</a></span>
          </p>
        </div>
      </footer>`;
  }
}
